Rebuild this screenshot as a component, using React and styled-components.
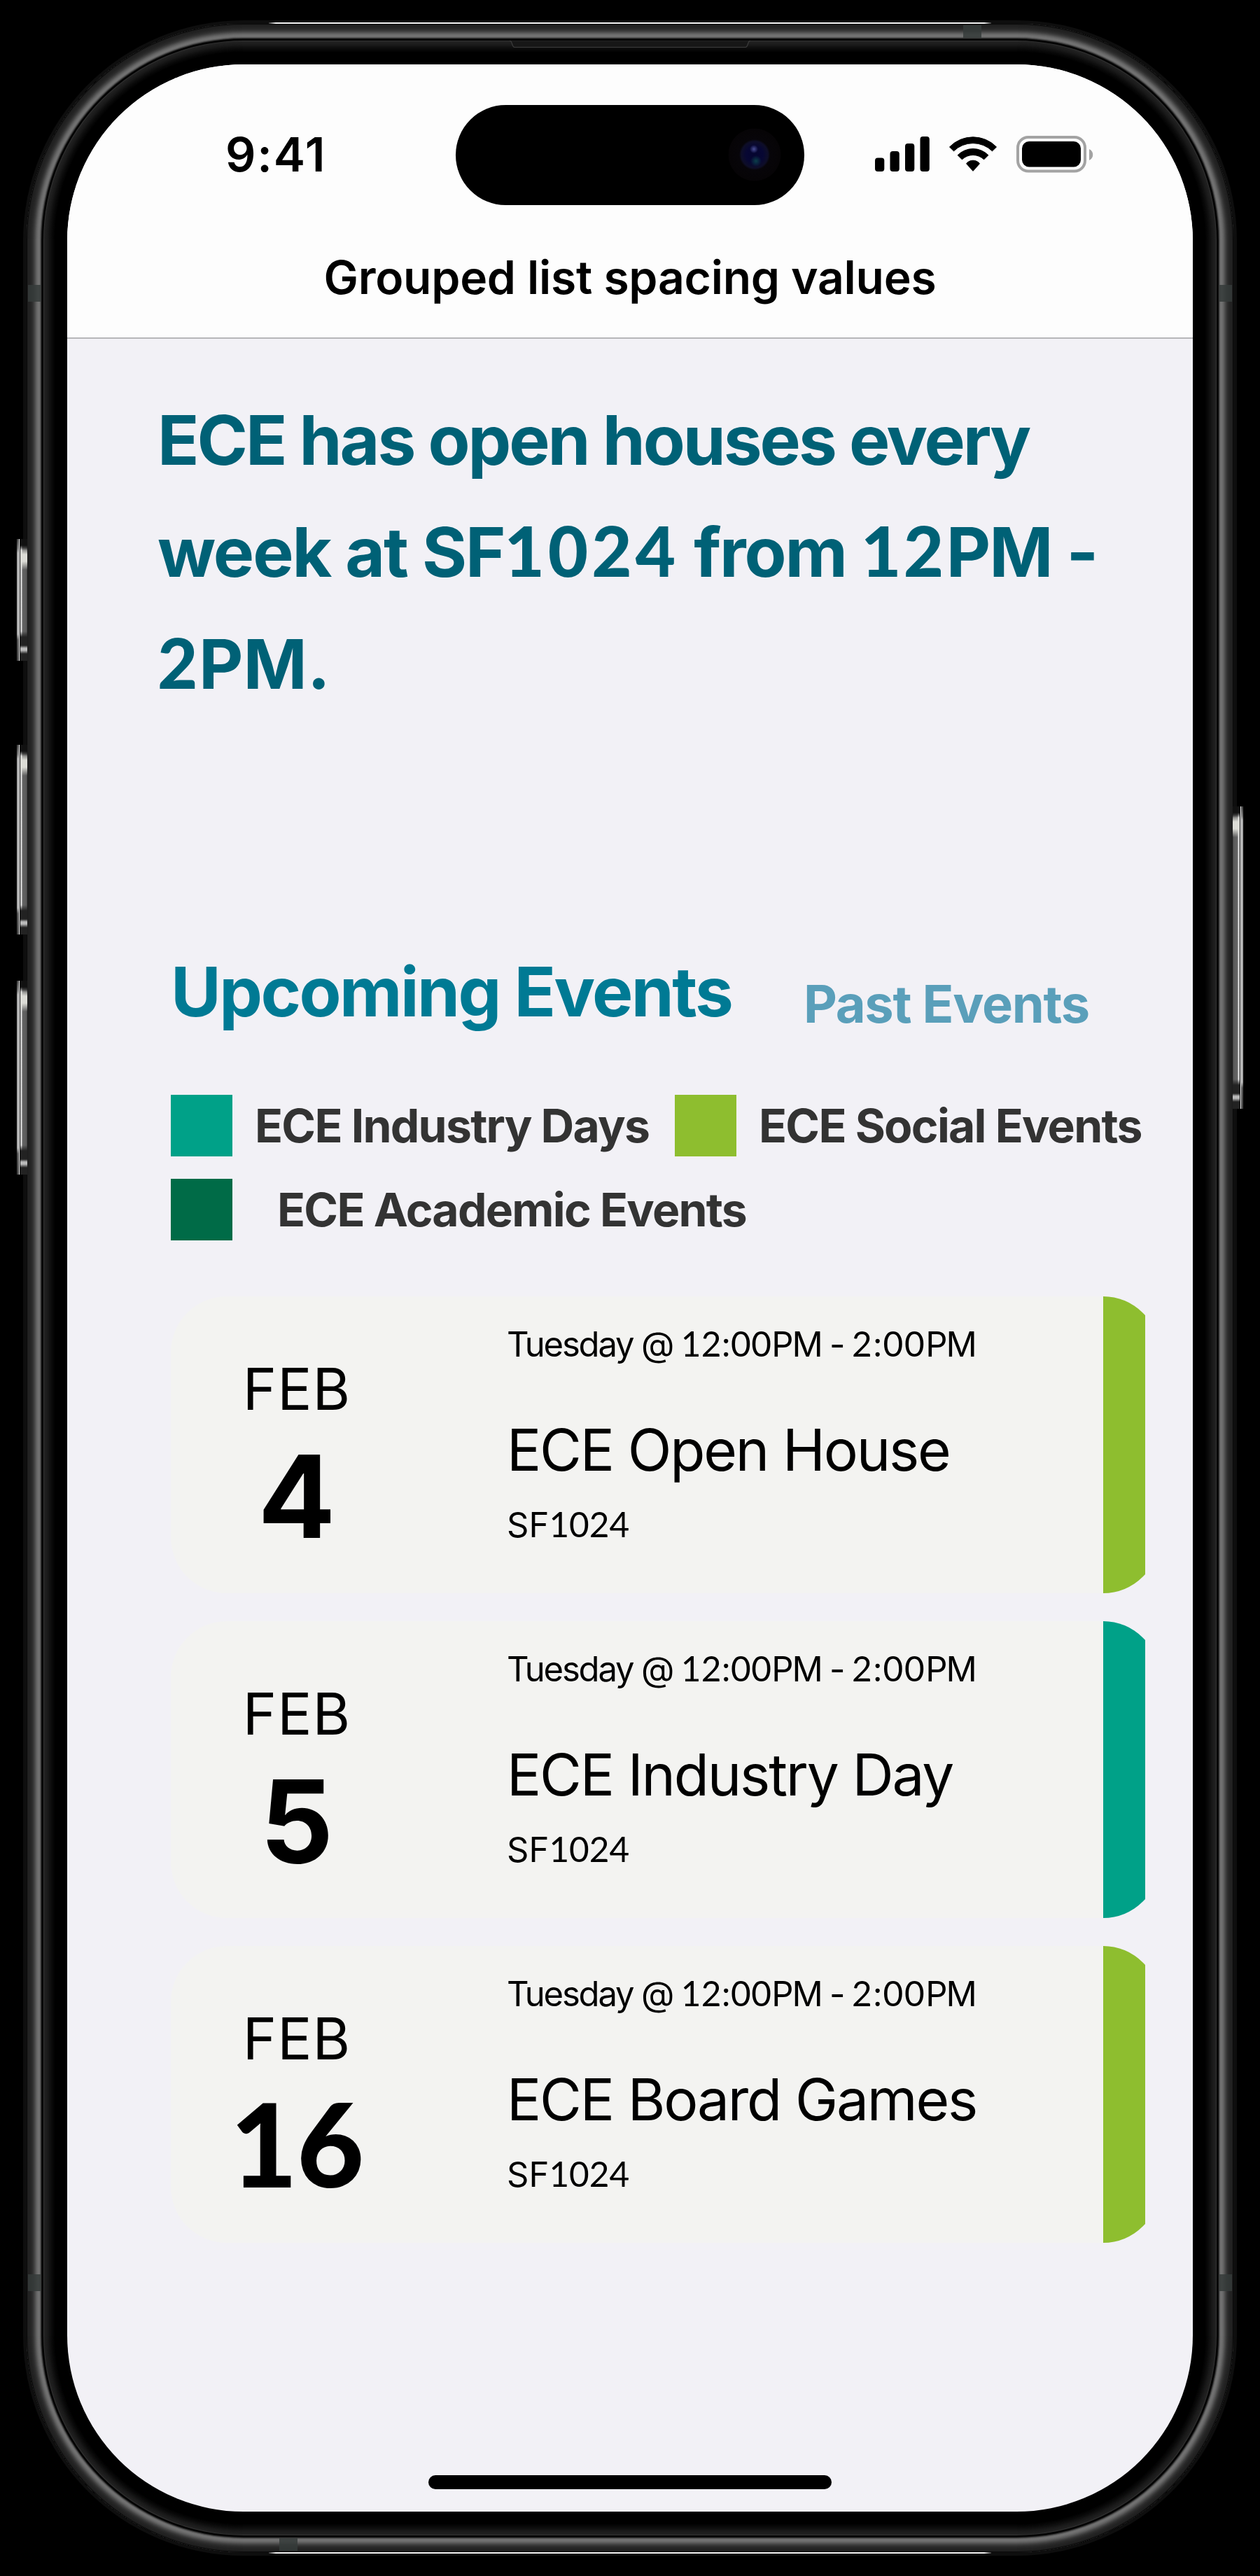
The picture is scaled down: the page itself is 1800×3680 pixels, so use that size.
import React from "react";
import styled, { createGlobalStyle, css } from "styled-components";

const colors = {
  teal: "#00a188",
  lime: "#8ebe2f",
  forest: "#006b47",
};

const GlobalStyle = createGlobalStyle`
  * { box-sizing: border-box; }
  body {
    margin: 0;
    background: #000;
    font-family: Inter, "Liberation Sans", sans-serif;
    font-kerning: normal;
  }
  h1, h2, h3, p { margin: 0; }
`;

/* Metal band and bezel, from the outer edge inwards, one tone per pixel. */
const bezelTones = [
  "#0a0a0a", "#1e1e1e", "#212121", "#222222", "#232323", "#252525", "#282828", "#2b2b2b",
  "#303030", "#363636", "#3e3e3e", "#474747", "#515151", "#5b5b5b", "#646464", "#6b6b6b",
  "#707070", "#727272", "#6e6e6e", "#5a5a5a", "#3a3a3a", "#101010", "#000000", "#050505",
  "#303030", "#232323", "#202020", "#1f1f1f", "#1d1d1d", "#1b1b1b", "#191919", "#161616",
  "#131313", "#101010", "#0e0e0e", "#0b0b0b", "#090909", "#070707", "#050505", "#030303",
  "#010101",
];

const bezelShadow = bezelTones
  .map((tone, i) => `inset 0 0 0 ${i + 1}px ${tone}`)
  .join(", ");

const Stage = styled.div`
  width: 1800px;
  height: 3680px;
  padding-top: 34px;
  display: flex;
  justify-content: center;
  align-items: flex-start;
  background: #000;
  overflow: hidden;
`;

const Device = styled.div`
  position: relative;
  width: 1724px;
  height: 3612px;
  padding: 58px;
  border-radius: 310px;
  background: #000;
  box-shadow: ${bezelShadow}, 0 0 0 5px #0e0e0e;
`;

const EdgeGlint = styled.div`
  position: absolute;
  left: 346px;
  right: 346px;
  height: 2px;
  background: linear-gradient(90deg, #333, #f4f4f4 10px, #f4f4f4 calc(100% - 10px), #333);
  ${(p) => (p.$bottom ? "bottom: -2px;" : "top: -2px;")}
`;

const Earpiece = styled.svg`
  position: absolute;
  left: 690px;
  top: 24px;
  width: 344px;
  height: 11px;
`;

const Antenna = styled.span`
  position: absolute;
  background: #353b3a;
  opacity: 0.85;
  ${(p) => p.$side === "left" && css`left: 2px; width: 18px; height: 24px; top: ${p.$at}px;`}
  ${(p) => p.$side === "right" && css`right: 2px; width: 18px; height: 24px; top: ${p.$at}px;`}
  ${(p) => p.$side === "top" && css`top: 2px; height: 18px; width: 26px; left: ${p.$at}px;`}
  ${(p) => p.$side === "bottom" && css`bottom: 2px; height: 18px; width: 26px; left: ${p.$at}px;`}
`;

const SideButton = styled.span`
  position: absolute;
  top: ${(p) => p.$top}px;
  height: ${(p) => p.$height}px;
  width: 15px;
  ${(p) => (p.$right ? "right: -14px; transform: scaleX(-1);" : "left: -14px;")}
  background:
    linear-gradient(180deg, #111 0, #111 9px, transparent 16px, transparent calc(100% - 42px), #222 calc(100% - 34px), #222 calc(100% - 22px), #bbb calc(100% - 18px), #bbb calc(100% - 15px), #222 calc(100% - 10px)) 5px 0 / 10px 100% no-repeat,
    linear-gradient(180deg, transparent 12px, #dcdcd6 22px, #dcdcd6 32px, transparent 44px) 5px 0 / 10px 100% no-repeat,
    linear-gradient(180deg, #444 0, #777 14px, transparent 20px, transparent calc(100% - 38px), #555 calc(100% - 30px), #444 100%) 0 0 / 3px 100% no-repeat,
    linear-gradient(90deg, #aaa 0, #aaa 3px, #eee 3px, #eee 4px, #111 4px, #111 5px, #999 5px, #e4e4e4 6px, #ddd 7px, #666 8px, #5a5a5a 14px, #333 15px);
`;

const Screen = styled.main`
  width: 1608px;
  height: 3496px;
  border-radius: 252px;
  overflow: hidden;
  background: #f2f1f6;
  display: flex;
  flex-direction: column;
`;

const Header = styled.header`
  height: 392px;
  flex: none;
  background: #fdfdfd;
  border-bottom: 2px solid #b6b6b9;
`;

const StatusBar = styled.div`
  height: 256px;
  display: grid;
  grid-template-columns: 555px 498px 1fr;
  align-items: center;
`;

const Time = styled.span`
  padding-left: 226px;
  font-size: 68px;
  line-height: 80px;
  font-weight: 600;
  letter-spacing: 1.8px;
  color: #000;
`;

const Island = styled.div`
  height: 143px;
  margin-top: 2px;
  padding-right: 33px;
  border-radius: 72px;
  background: #000;
  display: flex;
  align-items: center;
  justify-content: flex-end;
`;

const Camera = styled.span`
  width: 76px;
  height: 76px;
  border-radius: 50%;
  background:
    radial-gradient(circle 6px at 37px 30px, #4c5098, transparent),
    radial-gradient(circle 8px at 40px 47px, #0b3f4a, transparent),
    radial-gradient(circle at center, #050530 0, #070733 12px, #0e0e28 19px, #070509 22px, #060406 37px, #000 38px);
`;

const StatusIcons = styled.div`
  display: flex;
  align-items: center;
  padding-left: 101px;
`;

const SignalIcon = styled.svg`
  width: 78px;
  height: 54px;
`;

const WifiIcon = styled.svg`
  width: 70px;
  height: 54px;
  margin-left: 27px;
`;

const BatteryIcon = styled.svg`
  width: 110px;
  height: 54px;
  margin-left: 27px;
`;

const NavTitle = styled.h1`
  height: 96px;
  line-height: 96px;
  text-align: center;
  font-size: 66px;
  font-weight: 600;
  letter-spacing: -0.29px;
  color: #000;
`;

/* Numerals with a footed "1". */
const Figures = styled.span`
  font-family: Lato, "Noto Sans", sans-serif;
  font-size: 1.01em;
  line-height: 0;
  letter-spacing: ${(p) => p.$track || 0}px;
  ${(p) => p.$heavy && "font-weight: 900;"}
`;

const Content = styled.div`
  padding: 65px 0 0 148px;
  display: flex;
  flex-direction: column;
`;

const Announcement = styled.h2`
  margin-left: -19px;
  font-size: 98px;
  line-height: 160px;
  font-weight: 700;
  color: #006176;
  white-space: nowrap;
`;

const Line = styled.span`
  display: block;
  letter-spacing: ${(p) => p.$track}px;
`;

const Tabs = styled.nav`
  margin-top: 328px;
  height: 207px;
  display: grid;
  grid-template-columns: 904px auto;
  align-items: start;
  justify-content: start;
  font-weight: 700;
`;

const ActiveTab = styled.span`
  font-size: 98px;
  line-height: 120px;
  letter-spacing: -2.54px;
  color: #007a94;
`;

const Tab = styled.span`
  padding-top: 27px;
  font-size: 74px;
  line-height: 100px;
  letter-spacing: -1.3px;
  color: #5a9fba;
`;

const Legend = styled.ul`
  list-style: none;
  margin: 0;
  padding: 0;
  display: grid;
  grid-template-columns: 720px auto;
  justify-content: start;
  row-gap: 32px;
`;

const LegendItem = styled.li`
  height: 88px;
  display: flex;
  align-items: center;
  gap: ${(p) => p.$gap}px;
  font-size: 66px;
  line-height: 88px;
  font-weight: 700;
  letter-spacing: -1.75px;
  color: #333;
  white-space: nowrap;
`;

const Swatch = styled.span`
  width: 88px;
  height: 88px;
  flex: none;
  background: ${(p) => p.$color};
`;

const EventList = styled.section`
  margin-top: 80px;
  display: flex;
  flex-direction: column;
  gap: 40px;
`;

const Card = styled.article`
  width: 1392px;
  height: 424px;
  display: flex;
  overflow: hidden;
  border-radius: 80px 0 0 80px;
  background: linear-gradient(90deg, #f3f3f1 1332px, transparent 1332px);
`;

const DateColumn = styled.div`
  width: 360px;
  margin-right: 120px;
  padding-top: 83px;
  flex: none;
  display: flex;
  flex-direction: column;
  align-items: center;
`;

const Month = styled.span`
  font-size: 82px;
  line-height: 100px;
  letter-spacing: 1.1px;
`;

const Day = styled.span`
  margin-top: 3px;
  font-size: 164px;
  line-height: 200px;
  font-weight: 700;
`;

const Details = styled.div`
  flex: 1;
  padding-top: 39px;
  white-space: nowrap;
`;

const When = styled.p`
  font-size: 49px;
  line-height: 60px;
  letter-spacing: -2.2px;
`;

const EventTitle = styled.h3`
  margin-top: 71px;
  font-size: 82px;
  line-height: 100px;
  font-weight: 400;
  letter-spacing: -2.2px;
`;

const Place = styled.p`
  margin-top: 27px;
  font-size: 49px;
  line-height: 60px;
  letter-spacing: 0;
`;

const StripeClip = styled.div`
  width: 60px;
  flex: none;
  overflow: hidden;
`;

const Stripe = styled.div`
  width: 80px;
  height: 100%;
  border-radius: 0 80px 80px 0;
  background: ${(p) => p.$color};
`;

const HomeIndicator = styled.div`
  width: 576px;
  height: 20px;
  margin: auto auto 32px;
  border-radius: 10px;
  background: #000;
`;

const events = [
  { day: "4", title: "ECE Open House", color: colors.lime },
  { day: "5", title: "ECE Industry Day", color: colors.teal },
  { day: "16", title: "ECE Board Games", color: colors.lime },
];

function EventCard({ day, title, color }) {
  return (
    <Card>
      <DateColumn>
        <Month>FEB</Month>
        <Day>{day.includes("1") ? <Figures $heavy $track={-1}>{day}</Figures> : day}</Day>
      </DateColumn>
      <Details>
        <When>Tuesday @ <Figures $track={0.5}>12:00</Figures>PM - <Figures $track={1.7}>2:00</Figures>PM</When>
        <EventTitle>{title}</EventTitle>
        <Place>SF<Figures>1024</Figures></Place>
      </Details>
      <StripeClip><Stripe $color={color} /></StripeClip>
    </Card>
  );
}

export default function App() {
  return (
    <>
      <GlobalStyle />
      <Stage>
        <Device>
          <EdgeGlint />
          <EdgeGlint $bottom />
          <Earpiece viewBox="0 0 344 11">
            <path d="M0 0.5H1C4 0.5 3 9.5 7 9.5H337C341 9.5 340 0.5 343 0.5H344" fill="#171717" stroke="#3c3c3c" strokeWidth="1.2" />
          </Earpiece>
          <Antenna $side="top" $at={1338} />
          <Antenna $side="bottom" $at={361} />
          <Antenna $side="left" $at={373} />
          <Antenna $side="right" $at={373} />
          <Antenna $side="left" $at={3215} />
          <Antenna $side="right" $at={3215} />
          <SideButton $top={736} $height={174} />
          <SideButton $top={1030} $height={271} />
          <SideButton $top={1367} $height={277} />
          <SideButton $right $top={1118} $height={432} />
          <Screen>
            <Header>
              <StatusBar>
                <Time>9:41</Time>
                <Island><Camera /></Island>
                <StatusIcons>
                  <SignalIcon viewBox="0 0 78 54">
                    <rect x="0" y="32.5" width="13.3" height="19.5" rx="4" />
                    <rect x="21.5" y="23" width="13.3" height="29" rx="4" />
                    <rect x="43" y="12" width="13.3" height="40" rx="4" />
                    <rect x="64.5" y="2" width="13.3" height="50" rx="4" />
                  </SignalIcon>
                  <WifiIcon viewBox="464 99 210 162">
                    <g stroke="#000" strokeWidth="3" strokeLinejoin="round">
                      <path d="M468.500 149A140 140 0 0 1 669.500 149L651.500 166.500A118 118 0 0 0 486.500 166.500Z" transform="translate(0 1)" />
                      <path d="M503.500 184A92 92 0 0 1 634.500 184L616 202.500A67.600 67.600 0 0 0 522 202.500Z" transform="translate(0 1)" />
                      <path d="M540.500 221A37 37 0 0 1 597.500 221L569 253Z" />
                    </g>
                  </WifiIcon>
                  <BatteryIcon viewBox="0 0 110 54">
                    <rect x="2" y="3" width="96" height="48.500" rx="15" fill="none" stroke="#a3a3a3" strokeWidth="4" />
                    <rect x="8" y="9" width="84" height="36.500" rx="10" />
                    <path d="M104 20C111 23 111 33 104 36Z" fill="#a3a3a3" />
                  </BatteryIcon>
                </StatusIcons>
              </StatusBar>
              <NavTitle>Grouped list spacing values</NavTitle>
            </Header>
            <Content>
              <Announcement>
                <Line $track={-3.04}>ECE has open houses every</Line>
                <Line $track={-2.1}>week at SF<Figures $heavy $track={5}>1024</Figures> from <Figures $heavy $track={3.5}>12</Figures>PM -</Line>
                <Line $track={0.2}><Figures $heavy $track={1.5}>2</Figures>PM.</Line>
              </Announcement>
              <Tabs>
                <ActiveTab>Upcoming Events</ActiveTab>
                <Tab>Past Events</Tab>
              </Tabs>
              <Legend>
                <LegendItem $gap={32}><Swatch $color={colors.teal} />ECE Industry Days</LegendItem>
                <LegendItem $gap={32}><Swatch $color={colors.lime} />ECE Social Events</LegendItem>
                <LegendItem $gap={64}><Swatch $color={colors.forest} />ECE Academic Events</LegendItem>
              </Legend>
              <EventList>
                {events.map((event) => (
                  <EventCard key={event.day} {...event} />
                ))}
              </EventList>
            </Content>
            <HomeIndicator />
          </Screen>
        </Device>
      </Stage>
    </>
  );
}
